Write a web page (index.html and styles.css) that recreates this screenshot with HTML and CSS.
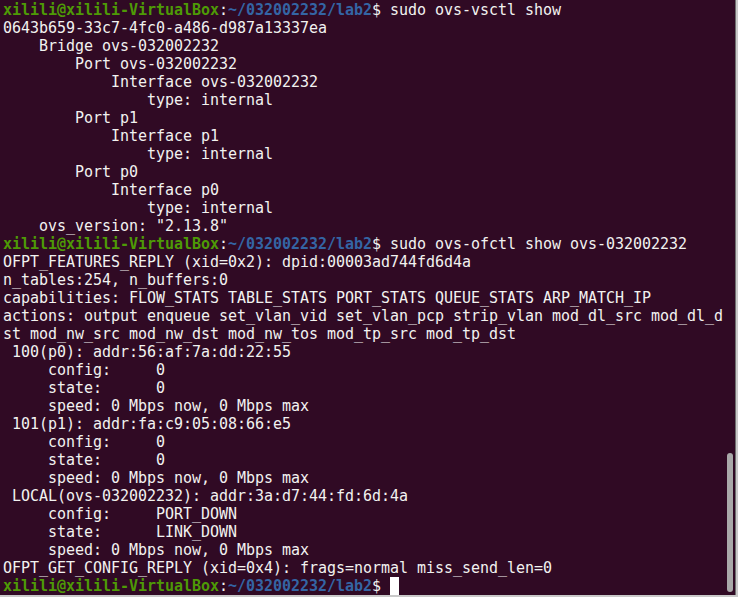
FILE: index.html
```html
<!DOCTYPE html>
<html>
<head>
<meta charset="utf-8">
<link rel="stylesheet" href="styles.css">
</head>
<body>
<div class="term">
<pre class="out"><span class="u">xilili@xilili-VirtualBox</span>:<span class="p">~/032002232/lab2</span>$ sudo ovs-vsctl show
0643b659-33c7-4fc0-a486-d987a13337ea
    Bridge ovs-032002232
        Port ovs-032002232
            Interface ovs-032002232
                type: internal
        Port p1
            Interface p1
                type: internal
        Port p0
            Interface p0
                type: internal
    ovs_version: "2.13.8"
<span class="u">xilili@xilili-VirtualBox</span>:<span class="p">~/032002232/lab2</span>$ sudo ovs-ofctl show ovs-032002232
OFPT_FEATURES_REPLY (xid=0x2): dpid:00003ad744fd6d4a
n_tables:254, n_buffers:0
capabilities: FLOW_STATS TABLE_STATS PORT_STATS QUEUE_STATS ARP_MATCH_IP
actions: output enqueue set_vlan_vid set_vlan_pcp strip_vlan mod_dl_src mod_dl_d
st mod_nw_src mod_nw_dst mod_nw_tos mod_tp_src mod_tp_dst
 100(p0): addr:56:af:7a:dd:22:55
     config:     0
     state:      0
     speed: 0 Mbps now, 0 Mbps max
 101(p1): addr:fa:c9:05:08:66:e5
     config:     0
     state:      0
     speed: 0 Mbps now, 0 Mbps max
 LOCAL(ovs-032002232): addr:3a:d7:44:fd:6d:4a
     config:     PORT_DOWN
     state:      LINK_DOWN
     speed: 0 Mbps now, 0 Mbps max
OFPT_GET_CONFIG_REPLY (xid=0x4): frags=normal miss_send_len=0
<span class="u">xilili@xilili-VirtualBox</span>:<span class="p">~/032002232/lab2</span>$ <span class="cursor"> </span></pre>
<div class="scrollbar"></div>
</div>
</body>
</html>
```

FILE: styles.css
```css
html, body {
  margin: 0;
  padding: 0;
  background: #c9c9c9;
}
.term {
  position: relative;
  width: 735px;
  height: 595px;
  background: #300a24;
  border-right: 1px solid #6e6e6e;
  overflow: hidden;
}
.out {
  margin: 0;
  padding: 1px 0 0 3px;
  font-family: "DejaVu Sans Mono", monospace;
  font-size: 15px;
  letter-spacing: -0.03px;
  line-height: 18px;
  color: #f2f2f0;
  white-space: pre;
}
.u {
  color: #4e9a06;
  font-weight: bold;
}
.p {
  color: #3465a4;
  font-weight: bold;
}
.cursor {
  background: #ffffff;
}
.scrollbar {
  position: absolute;
  left: 727px;
  top: 453px;
  width: 6px;
  height: 139px;
  border-radius: 3px;
  background: #a9a9a9;
}
```
